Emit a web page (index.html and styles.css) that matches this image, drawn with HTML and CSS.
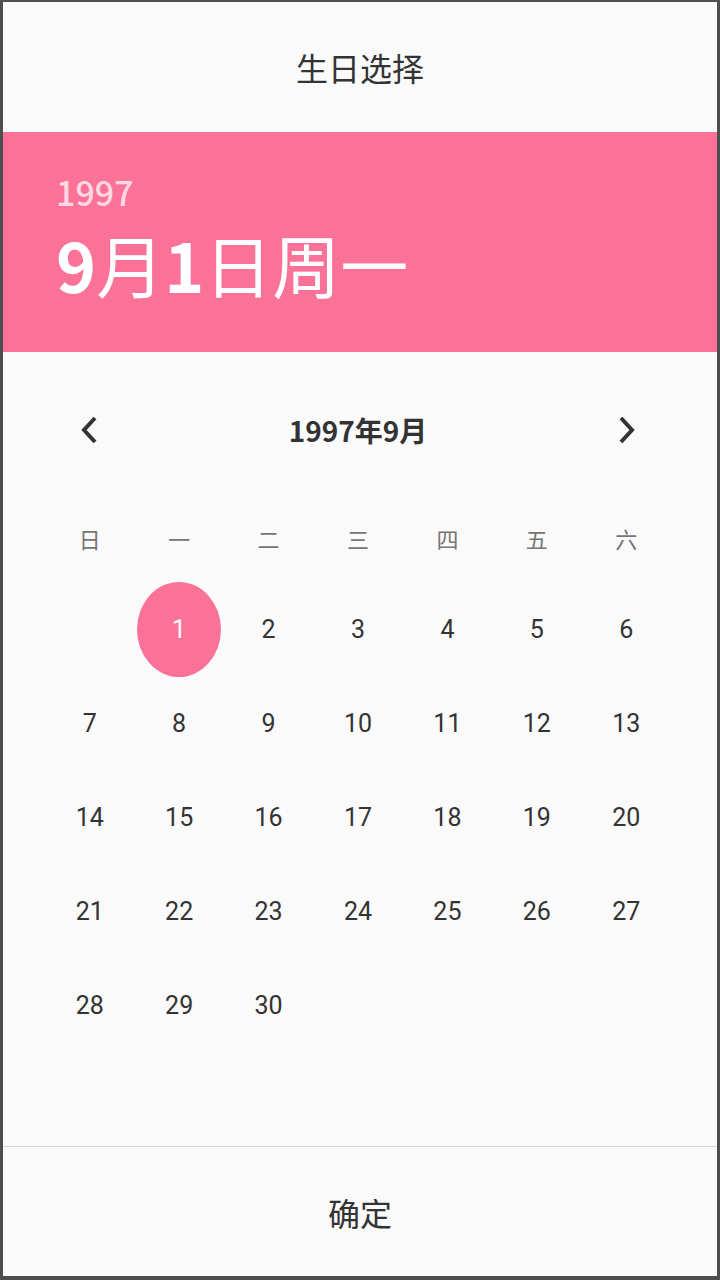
FILE: index.html
```html
<!DOCTYPE html>
<html lang="zh-CN">
<head>
<meta charset="utf-8">
<title>生日选择</title>
<link rel="stylesheet" href="styles.css">
</head>
<body>
<div class="dialog">
  <div class="title">生日选择</div>
  <div class="banner">
    <div class="year">1997</div>
    <div class="date"><span class="d">9</span>月<span class="d">1</span>日周一</div>
  </div>
  <div class="calendar">
    <div class="nav">
      <div class="nav-btn">
        <svg width="20" height="30" viewBox="0 0 20 30"><polyline points="15,3 4,15 15,27" fill="none" stroke="#333" stroke-width="4"/></svg>
      </div>
      <div class="month">1997年9月</div>
      <div class="nav-btn">
        <svg width="20" height="30" viewBox="0 0 20 30"><polyline points="5,3 16,15 5,27" fill="none" stroke="#333" stroke-width="4"/></svg>
      </div>
    </div>
    <div class="weekdays">
      <div>日</div><div>一</div><div>二</div><div>三</div><div>四</div><div>五</div><div>六</div>
    </div>
    <div class="days">
      <div class="day"></div>
      <div class="day sel"><span>1</span></div>
      <div class="day"><span>2</span></div>
      <div class="day"><span>3</span></div>
      <div class="day"><span>4</span></div>
      <div class="day"><span>5</span></div>
      <div class="day"><span>6</span></div>
      <div class="day"><span>7</span></div>
      <div class="day"><span>8</span></div>
      <div class="day"><span>9</span></div>
      <div class="day"><span>10</span></div>
      <div class="day"><span>11</span></div>
      <div class="day"><span>12</span></div>
      <div class="day"><span>13</span></div>
      <div class="day"><span>14</span></div>
      <div class="day"><span>15</span></div>
      <div class="day"><span>16</span></div>
      <div class="day"><span>17</span></div>
      <div class="day"><span>18</span></div>
      <div class="day"><span>19</span></div>
      <div class="day"><span>20</span></div>
      <div class="day"><span>21</span></div>
      <div class="day"><span>22</span></div>
      <div class="day"><span>23</span></div>
      <div class="day"><span>24</span></div>
      <div class="day"><span>25</span></div>
      <div class="day"><span>26</span></div>
      <div class="day"><span>27</span></div>
      <div class="day"><span>28</span></div>
      <div class="day"><span>29</span></div>
      <div class="day"><span>30</span></div>
    </div>
  </div>
  <div class="footer">确定</div>
</div>
</body>
</html>
```

FILE: styles.css
```css
html, body {
  margin: 0;
  padding: 0;
}
body {
  background: #4e4e4e;
  width: 720px;
  height: 1280px;
  overflow: hidden;
  font-family: "Noto Sans CJK SC", "Noto Sans", sans-serif;
}
.dialog {
  margin: 2px 3px 0 3px;
  width: 714px;
  height: 1274px;
  background: #fafafa;
  display: flex;
  flex-direction: column;
}
.title {
  height: 130px;
  display: flex;
  align-items: center;
  justify-content: center;
  font-size: 32px;
  color: #333;
}
.banner {
  height: 220px;
  background: #fb7299;
  padding: 38px 0 0 53px;
  box-sizing: border-box;
  color: #fff;
}
.year {
  font-size: 34px;
  line-height: 44px;
  font-weight: 500;
  color: rgba(255, 255, 255, 0.72);
}
.date {
  margin-top: 8px;
  font-size: 68px;
  line-height: 84px;
  font-weight: 400;
}
.date .d {
  font-weight: 700;
}
.calendar {
  flex: 1;
  padding: 38px 46px 0 42px;
}
.nav {
  height: 80px;
  display: flex;
  align-items: center;
  justify-content: space-between;
}
.nav-btn {
  width: 90px;
  height: 80px;
  display: flex;
  align-items: center;
  justify-content: center;
}
.month {
  font-size: 28px;
  font-weight: 700;
  color: #333;
}
.weekdays {
  margin-top: 40px;
  height: 56px;
  display: grid;
  grid-template-columns: repeat(7, 1fr);
  align-items: center;
  justify-items: center;
  font-size: 22px;
  color: #757575;
}
.days {
  margin-top: 16px;
  display: grid;
  grid-template-columns: repeat(7, 1fr);
  grid-auto-rows: 94px;
}
.day {
  display: flex;
  align-items: center;
  justify-content: center;
  font-family: Roboto, "Noto Sans", sans-serif;
  font-size: 25px;
  color: #333;
}
.day.sel span {
  width: 84px;
  height: 95px;
  border-radius: 50%;
  background: #fb7299;
  color: #fff;
  display: flex;
  align-items: center;
  justify-content: center;
}
.footer {
  height: 129px;
  border-top: 1px solid #d6d6d6;
  display: flex;
  align-items: center;
  justify-content: center;
  font-size: 32px;
  color: #333;
}
```
